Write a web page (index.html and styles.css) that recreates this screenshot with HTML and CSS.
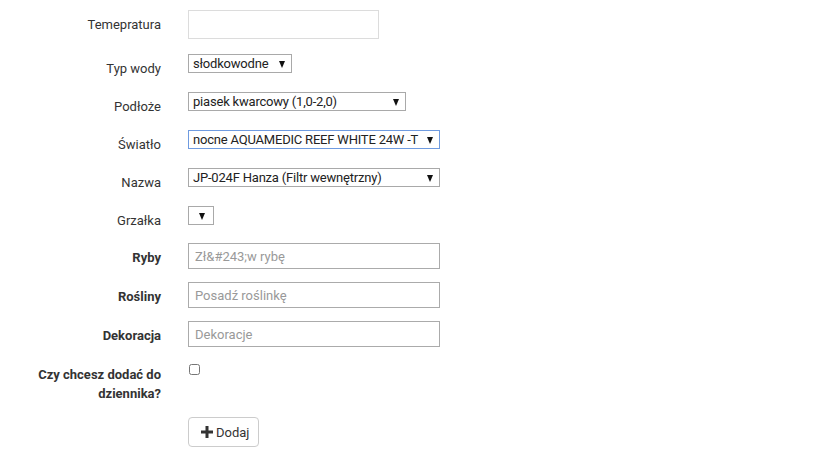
FILE: index.html
```html
<!DOCTYPE html>
<html lang="pl">
<head>
<meta charset="utf-8">
<title>Formularz</title>
<link rel="stylesheet" href="styles.css">
</head>
<body>
<form class="form">
  <div class="row row-first">
    <label class="lbl">Temepratura</label>
    <div class="ctrl"><input class="text text-light" type="text"></div>
  </div>
  <div class="row">
    <label class="lbl">Typ wody</label>
    <div class="ctrl"><span class="sel w-typ"><select><option>słodkowodne</option></select></span></div>
  </div>
  <div class="row">
    <label class="lbl">Podłoże</label>
    <div class="ctrl"><span class="sel w-pod"><select><option>piasek kwarcowy (1,0-2,0)</option></select></span></div>
  </div>
  <div class="row">
    <label class="lbl">Światło</label>
    <div class="ctrl"><span class="sel w-full sel-focus"><select><option>nocne AQUAMEDIC REEF WHITE 24W -T</option></select></span></div>
  </div>
  <div class="row">
    <label class="lbl">Nazwa</label>
    <div class="ctrl"><span class="sel w-full"><select><option>JP-024F Hanza (Filtr wewnętrzny)</option></select></span></div>
  </div>
  <div class="row row-tight">
    <label class="lbl">Grzałka</label>
    <div class="ctrl"><span class="sel w-empty"><select><option></option></select></span></div>
  </div>
  <div class="row">
    <label class="lbl bold">Ryby</label>
    <div class="ctrl"><input class="text text-wide" type="text" placeholder="Zł&amp;#243;w rybę"></div>
  </div>
  <div class="row">
    <label class="lbl bold">Rośliny</label>
    <div class="ctrl"><input class="text text-wide" type="text" placeholder="Posadź roślinkę"></div>
  </div>
  <div class="row">
    <label class="lbl bold">Dekoracja</label>
    <div class="ctrl"><input class="text text-wide" type="text" placeholder="Dekoracje"></div>
  </div>
  <div class="row row-check">
    <label class="lbl bold lbl-multi">Czy chcesz dodać do dziennika?</label>
    <div class="ctrl"><input class="check" type="checkbox"></div>
  </div>
  <div class="row">
    <div class="lbl"></div>
    <div class="ctrl">
      <button class="btn" type="button"><svg class="plus" width="12" height="12" viewBox="0 0 12 12"><path d="M4.5 0h3v4.5H12v3H7.5V12h-3V7.5H0v-3h4.5z" fill="#333"/></svg>Dodaj</button>
    </div>
  </div>
</form>
</body>
</html>
```

FILE: styles.css
```css
* { box-sizing: border-box; }
body {
  margin: 0;
  background: #fff;
  font-family: Roboto, "Liberation Sans", Arial, sans-serif;
  font-size: 13px;
  color: #333;
}
.form {
  padding-top: 10px;
}
.row {
  display: flex;
  align-items: flex-start;
  margin-bottom: 13px;
}
.row-first {
  margin-bottom: 15px;
}
.row-tight {
  margin-bottom: 12px;
}
.row-check {
  margin-bottom: 14px;
}
.lbl {
  width: 146px;
  margin-left: 15px;
  flex: none;
  text-align: right;
  padding-top: 5px;
  line-height: 20px;
  color: #333;
}
.bold {
  font-weight: 700;
}
.lbl-multi {
  line-height: 19px;
}
.ctrl {
  margin-left: 27px;
  display: flex;
}
.text {
  display: block;
  font-family: inherit;
  font-size: 13px;
  color: #555;
  background: #fff;
  border-radius: 0;
  outline: none;
  padding: 0 6px;
}
.text::placeholder {
  color: #999;
}
.text-light {
  width: 191px;
  height: 29px;
  border: 1px solid #dcdcdc;
}
.text-wide {
  width: 252px;
  height: 26px;
  border: 1px solid #ababab;
}
.sel {
  position: relative;
  display: block;
  height: 19px;
}
.sel select {
  -webkit-appearance: none;
  appearance: none;
  display: block;
  width: 100%;
  height: 19px;
  margin: 0;
  border: 1px solid #a9a9a9;
  border-radius: 0;
  background: #fff;
  font-family: inherit;
  font-size: 13px;
  letter-spacing: -0.2px;
  color: #222;
  padding: 0 14px 0 4px;
  line-height: 17px;
  outline: none;
}
.sel::after {
  content: "";
  position: absolute;
  right: 7px;
  top: 7px;
  width: 0;
  height: 0;
  border-left: 3.5px solid transparent;
  border-right: 3.5px solid transparent;
  border-top: 7px solid #111;
  pointer-events: none;
}
.sel-focus select {
  border-color: #6f9be0;
}
.w-typ { width: 104px; }
.w-pod { width: 218px; }
.w-full { width: 252px; }
.w-empty { width: 26px; }
.w-empty::after { right: 9px; }
.check {
  width: 11px;
  height: 11px;
  margin: 4px 0 0 1px;
}
.btn {
  display: flex;
  align-items: center;
  height: 30px;
  width: 71px;
  padding: 0 0 0 12px;
  border: 1px solid #ccc;
  border-radius: 4px;
  background: #fff;
  font-family: inherit;
  font-size: 13px;
  color: #333;
  cursor: pointer;
}
.plus {
  display: block;
  margin-right: 3px;
  margin-top: -1px;
}
```
